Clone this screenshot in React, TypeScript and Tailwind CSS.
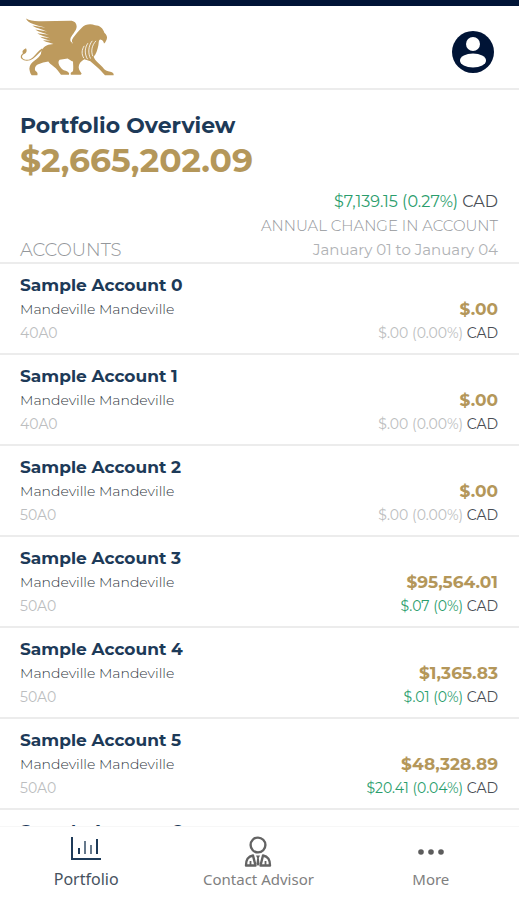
import React from 'react';

type Account = {
  name: string;
  holder: string;
  code: string;
  balance: string;
  change: string;
  gain: boolean;
};

const holder = 'Mandeville Mandeville';

const accounts: Account[] = [
  { name: 'Sample Account 0', holder, code: '40A0', balance: '$.00', change: '$.00 (0.00%)', gain: false },
  { name: 'Sample Account 1', holder, code: '40A0', balance: '$.00', change: '$.00 (0.00%)', gain: false },
  { name: 'Sample Account 2', holder, code: '50A0', balance: '$.00', change: '$.00 (0.00%)', gain: false },
  { name: 'Sample Account 3', holder, code: '50A0', balance: '$95,564.01', change: '$.07 (0%)', gain: true },
  { name: 'Sample Account 4', holder, code: '50A0', balance: '$1,365.83', change: '$.01 (0%)', gain: true },
  { name: 'Sample Account 5', holder, code: '50A0', balance: '$48,328.89', change: '$20.41 (0.04%)', gain: true },
  { name: 'Sample Account 6', holder, code: '50A0', balance: '$.00', change: '$.00 (0.00%)', gain: false }
];

function GriffinLogo() {
  return (
    <svg viewBox="31 32 288 176" className="w-24 h-[59px]" fill="#bd9a5d" role="img" aria-label="Mandeville">
      {/* Wing */}
      <path d="M49 33C60 40 76 42 96 41L182 40C194 40 201 47 201 58C200 70 189 80 183 91C180 99 183 105 190 107C170 117 140 112 124 107C116 104 106 102 100 98L124 100C112 97 98 93 91 88L122 92C108 87 91 83 83 77L118 82C103 77 84 72 77 66L113 72C94 65 75 60 68 54L108 61C82 53 54 48 49 33Z" />
      {/* Body and head */}
      <path d="M190 107C185 103 186 96 191 90C198 80 209 69 217 60C226 50 243 48 256 53C270 53 281 63 284 76C291 81 294 90 291 96C288 101 288 105 283 108C282 101 278 97 272 96C266 98 268 106 266 114C263 128 260 139 252 148C256 160 270 170 279 179C285 188 293 191 302 193C309 194 313 198 312 203L286 203C279 197 274 188 266 182L242 161C236 158 230 157 224 155C213 161 207 169 207 179C207 188 214 193 216 199L213 202L184 202C181 198 184 193 190 191C192 180 190 170 190 162C184 160 178 156 174 153L150 157C144 163 147 171 151 177C155 183 160 188 168 190C176 192 180 197 178 202L154 202C148 194 142 183 131 176C125 172 119 167 116 162C106 163 95 167 84 171C76 175 74 184 77 190C83 193 85 199 83 203L66 203C61 198 60 190 59 184C60 172 66 166 74 160C84 152 91 147 94 139C94 128 102 117 116 112C136 105 160 114 190 107Z" />
      {/* Tail */}
      <path d="M100 126C88 135 80 147 70 154C59 162 43 162 36 154C31 148 34 141 40 137C36 132 39 127 49 122C53 129 51 137 42 140C35 144 36 151 43 155C52 159 63 156 70 149C79 141 85 130 97 123Z" />
      {/* Mane and shoulder lines */}
      <g fill="none" stroke="#fff" strokeWidth="2.5" strokeLinecap="round">
        <path d="M223 116C216 127 215 140 222 151" />
        <path d="M234 108C225 121 224 139 233 154" />
        <path d="M247 101C235 116 235 138 242 152" />
        <path d="M258 101C247 113 243 130 249 145" />
        <path d="M203 68C196 77 186 86 185 98" strokeWidth="3" />
      </g>
    </svg>
  );
}

function AccountRow({ account }: { account: Account }) {
  return (
    <li className="flex items-end justify-between border-b-2 border-[#ececec] pt-[9px] pr-[21px] pb-2 pl-5 whitespace-nowrap">
      <div>
        <h2 className="text-[17px] leading-6 font-bold text-[#1d3a58]">{account.name}</h2>
        <p className="text-sm leading-6 font-light text-[#30373e]">{account.holder}</p>
        <p className="text-sm leading-6 text-[#bcbec0]">{account.code}</p>
      </div>
      <div className="text-right">
        <p className="text-[17px] leading-6 font-bold text-[#b4975a]">{account.balance}</p>
        <p className="text-sm leading-6 text-[#484d53]">
          <span className={account.gain ? 'text-[#2a9d6c]' : 'text-[#bcbec0]'}>{account.change}</span>{' '}
          CAD
        </p>
      </div>
    </li>
  );
}

function PortfolioIcon() {
  return (
    <svg viewBox="0 0 32 26" className="w-8 h-[26px]" fill="none" aria-hidden="true">
      <path d="M2 1V23H31" stroke="#1d3a58" strokeWidth="2" />
      <path d="M9 12V18M27 3V18" stroke="#1d3a58" strokeWidth="2" />
      <path d="M15 5V18M21 9V18" stroke="#66798c" strokeWidth="2" />
    </svg>
  );
}

function AdvisorIcon() {
  return (
    <svg viewBox="0 0 28 32" className="w-7 h-8" fill="none" stroke="#636363" strokeWidth="2.4" strokeLinejoin="round" aria-hidden="true">
      <circle cx="14" cy="9" r="7.4" />
      <path d="M9 19.5C4 20.5 2 23 2 29.5H11.5ZM19 19.5C24 20.5 26 23 26 29.5H16.5Z" />
      <path d="M6.5 25V29M21.5 25V29" strokeWidth="1.8" />
      <path d="M12 19.5H16L14.8 22L15.6 28L14 30L12.4 28L13.2 22Z" fill="#636363" stroke="none" />
    </svg>
  );
}

function MoreIcon() {
  return (
    <svg viewBox="0 0 28 8" className="w-7 h-2" fill="#5c5c5c" aria-hidden="true">
      <circle cx="4" cy="4" r="2.8" />
      <circle cx="14" cy="4" r="2.8" />
      <circle cx="24" cy="4" r="2.8" />
    </svg>
  );
}

export default function App() {
  return (
    <div className="flex h-screen flex-col overflow-hidden bg-white font-['Montserrat','Inter',sans-serif]">
      <header className="flex items-center justify-between border-t-6 border-b-2 border-t-[#001436] border-b-[#ececec] px-5 pt-3 pb-[11px]">
        <GriffinLogo />
        <button type="button" aria-label="Profile" className="mt-2 mr-[5px]">
          <svg viewBox="0 0 42 42" className="size-[42px]" aria-hidden="true">
            <circle cx="21" cy="21" r="21" fill="#001436" />
            <circle cx="21" cy="13" r="7" fill="#fff" />
            <ellipse cx="21" cy="29.5" rx="13" ry="7" fill="#fff" />
          </svg>
        </button>
      </header>

      <main className="min-h-0 flex-1 overflow-x-hidden overflow-y-auto [scrollbar-width:none]">
        <section className="border-b-2 border-[#ececec] pt-5 pr-[21px] pl-5 whitespace-nowrap">
          <h1 className="text-[22px] leading-8 font-bold text-[#1d3a58]">Portfolio Overview</h1>
          <p className="text-[33px] leading-9 font-bold text-[#b4975a]">$2,665,202.09</p>
          <div className="mt-3 flex items-end justify-between">
            <p className="text-lg leading-6 font-light text-[#94979b]">ACCOUNTS</p>
            <div className="text-right text-[15px] leading-6 text-[#b0b2b5]">
              <p className="text-base leading-6 text-[#484d53]">
                <span className="text-[#2a9d6c]">$7,139.15 (0.27%)</span> CAD
              </p>
              <p className="font-light text-[#94979b]">ANNUAL CHANGE IN ACCOUNT</p>
              <p>January 01 to January 04</p>
            </div>
          </div>
        </section>

        <ul>
          {accounts.map((account) => (
            <AccountRow key={account.name} account={account} />
          ))}
        </ul>
      </main>

      <nav className="grid shrink-0 grid-cols-3 border-t border-[#f7f7f7] bg-white pt-0.5 pr-0.5 pb-[9px] font-['Noto_Sans',sans-serif] text-[#808080]">
        <button type="button" aria-current="page" className="flex flex-col items-center text-base text-[#46525e]">
          <span className="flex h-[38px] items-center pt-0.5">
            <PortfolioIcon />
          </span>
          <span className="leading-6">Portfolio</span>
        </button>
        <button type="button" className="flex flex-col items-center text-[15px]">
          <span className="flex h-[38px] items-center pt-2">
            <AdvisorIcon />
          </span>
          <span className="leading-6">Contact Advisor</span>
        </button>
        <button type="button" className="flex flex-col items-center text-[15px]">
          <span className="flex h-[38px] items-center pt-2">
            <MoreIcon />
          </span>
          <span className="leading-6">More</span>
        </button>
      </nav>
    </div>
  );
}
